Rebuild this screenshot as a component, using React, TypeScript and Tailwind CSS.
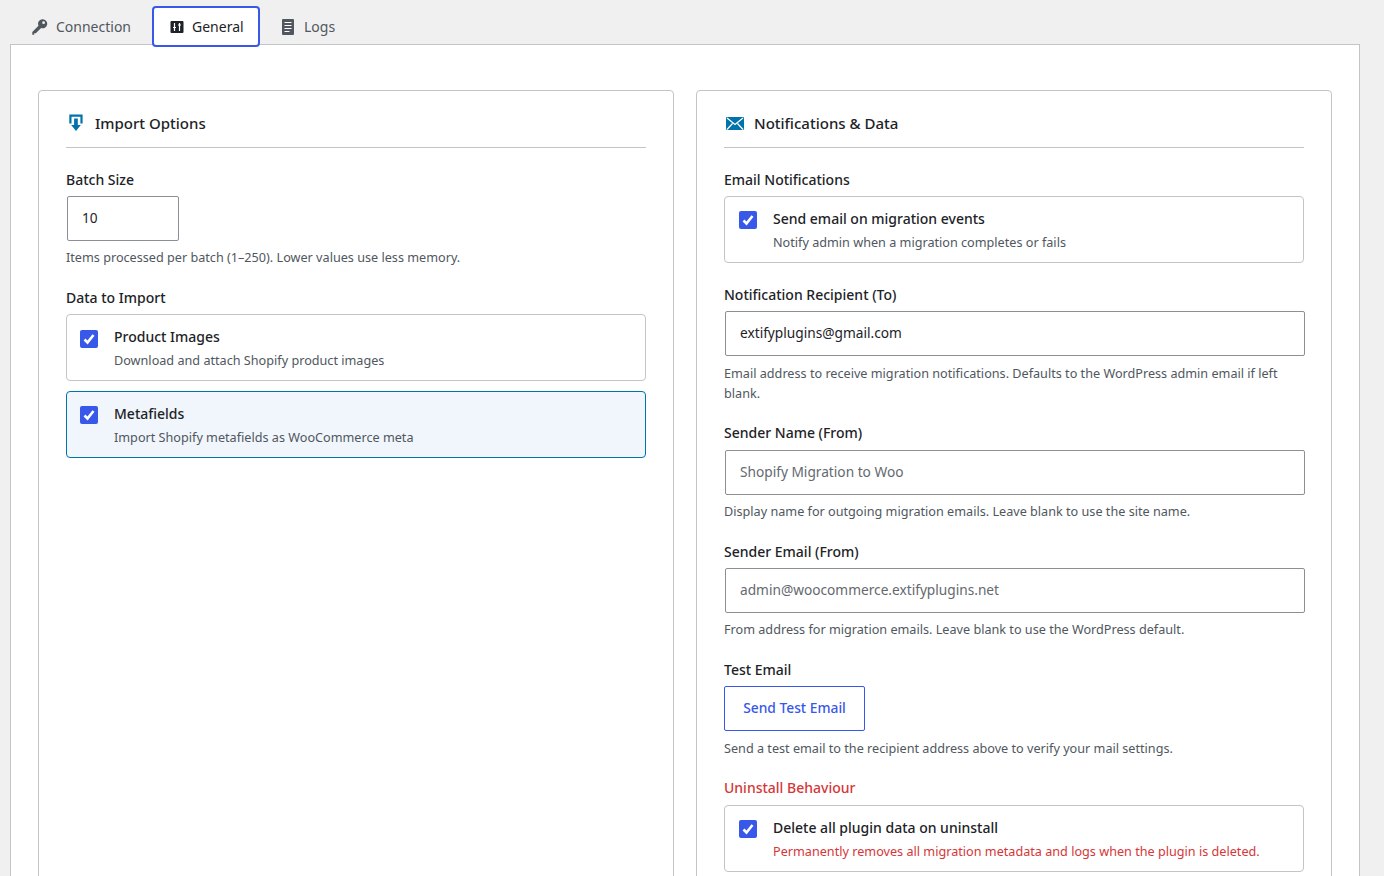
import { ReactNode } from 'react';

function Check({ low }: { low?: boolean }) {
  return (
    <span className={low ? 'mt-[3px] flex h-[18px] w-[18px] shrink-0 items-center justify-center rounded-[2px] bg-[#3858e9]' : 'mt-[2px] flex h-[18px] w-[18px] shrink-0 items-center justify-center rounded-[2px] bg-[#3858e9]'}>
      <svg viewBox="0 0 18 18" className="h-[18px] w-[18px]" fill="none" stroke="#fff" strokeWidth="2.6">
        <path d="M4.5 9.500l3 3 6-7.500" />
      </svg>
    </span>
  );
}

function Option({ title, desc, active, danger, narrow, low }: { title: string; desc: string; active?: boolean; danger?: boolean; narrow?: boolean; low?: boolean }) {
  const pad = narrow ? 'pl-[13px]' : 'pl-[14px]';
  return (
    <div
      className={
        active
          ? `flex h-[67px] gap-4 rounded border border-[#0073aa] bg-[#f0f6fc] pt-[12px] ${pad}`
          : `flex h-[67px] gap-4 rounded border border-[#c3c4c7] bg-white pt-[12px] ${pad}`
      }
    >
      <Check low={low} />
      <div>
        <div className="text-[14px] leading-[20px] font-medium text-[#1d2327]">{title}</div>
        <div className={danger ? 'mt-[3px] text-[12.65px] leading-[20px] text-[#d63638]' : 'mt-[3px] text-[12.65px] leading-[20px] text-[#50575e]'}>{desc}</div>
      </div>
    </div>
  );
}

function Label({ children, danger }: { children: ReactNode; danger?: boolean }) {
  return (
    <div className={danger ? 'mb-[6px] text-[14px] leading-[20px] font-medium text-[#d63638]' : 'mb-[6px] text-[14px] leading-[20px] font-medium text-[#1d2327]'}>
      {children}
    </div>
  );
}

function Help({ children, far }: { children: ReactNode; far?: boolean }) {
  return <p className={far ? 'mt-[7px] text-[12.65px] leading-[20px] text-[#50575e]' : 'mt-[6px] text-[12.65px] leading-[20px] text-[#50575e]'}>{children}</p>;
}

function Field({ value, placeholder }: { value?: string; placeholder?: string }) {
  return (
    <input
      readOnly
      value={value}
      placeholder={placeholder}
      className="ml-px block h-[45px] w-full rounded-[2px] border border-[#8c8f94] bg-white px-[14px] pb-[2px] text-[13.7px] text-[#1d2327] outline-none placeholder:text-[#646970]"
    />
  );
}

function Card({ icon, title, children }: { icon: ReactNode; title: string; children: ReactNode }) {
  return (
    <section className="h-[900px] rounded border border-[#c3c4c7] bg-white px-[27px] pt-[20px]">
      <div className="mb-[22px] flex h-[37px] items-start border-b border-[#c3c4c7]">
        {icon}
        <h2 className="text-[15px] leading-[24px] font-medium text-[#1d2327]">{title}</h2>
      </div>
      {children}
    </section>
  );
}

export default function App() {
  return (
    <div className="h-[876px] overflow-hidden bg-[#f0f0f1] font-['Noto_Sans',sans-serif]">
      <nav className="relative z-10 ml-[10px] flex h-[45px] items-start pl-[22px]">
        <div className="mt-[6px] mr-[21px] flex h-[41px] items-center gap-[8px] text-[14px] text-[#50575e]">
          <svg viewBox="0 0 16 16" className="h-[16px] w-[16px]">
            <path fillRule="evenodd" fill="#50575e" d="M10.800 0.300a4.500 4.500 0 1 1-1.700 8.700L3.800 14.300H2.200V15.700H0.300V13L6.500 6.800A4.500 4.500 0 0 1 10.800 0.300zM11.600 2.300a1.400 1.400 0 1 0 0 2.800 1.400 1.400 0 0 0 0-2.800z" />
          </svg>
          Connection
        </div>
        <div className="mt-[6px] flex h-[41px] w-[108px] items-center gap-[8px] rounded-[4px] border-2 border-[#3858e9] bg-white pl-[16px] text-[14px] text-[#1d2327]">
          <svg viewBox="0 0 14 14" className="h-[14px] w-[14px]">
            <rect x="0.500" y="1" width="13" height="12" rx="1" fill="#1d2327" />
            <path d="M4.500 3v8M9.500 3v8M3 7.500h3M8 5h3" stroke="#fff" strokeWidth="1.200" />
          </svg>
          General
        </div>
        <div className="mt-[6px] ml-[21px] flex h-[41px] items-center gap-[9px] text-[14px] text-[#50575e]">
          <svg viewBox="0 0 14 16" className="h-[16px] w-[14px]">
            <rect x="1" y="0" width="12" height="16" rx="1" fill="#50575e" />
            <path d="M3.500 3.500h7M3.500 6.500h7M3.500 9.500h7M3.500 12.500h5" stroke="#fff" strokeWidth="1" />
          </svg>
          Logs
        </div>
      </nav>

      <main className="-mt-px ml-[10px] grid h-[900px] w-[1350px] grid-cols-[636px_636px] gap-[22px] border border-[#c3c4c7] bg-white px-[27px] pt-[45px]">
        <Card
          title="Import Options"
          icon={
            <svg viewBox="0 0 14 18" className="mt-[3px] mr-[12px] ml-[3px] h-[18px] w-[14px]" fill="#0073aa">
              <path d="M0.300 0.500H13.600V9.500H11.400V2.700H2.500V9.500H0.300z" />
              <path d="M5.100 4.500H8.800V11H11.800L7 17 2.200 11H5.100z" />
            </svg>
          }
        >
          <Label>Batch Size</Label>
          <div className="w-[112px]">
            <Field value="10" />
          </div>
          <Help>Items processed per batch (1–250). Lower values use less memory.</Help>
          <div className="mt-[21px]">
            <Label>Data to Import</Label>
          </div>
          <div className="flex flex-col gap-[10px]">
            <Option narrow low title="Product Images" desc="Download and attach Shopify product images" />
            <Option narrow active title="Metafields" desc="Import Shopify metafields as WooCommerce meta" />
          </div>
        </Card>

        <Card
          title="Notifications & Data"
          icon={
            <svg viewBox="0 0 18 13" className="mt-[6px] mr-[10px] ml-[2px] h-[13px] w-[18px]">
              <rect x="0" y="0" width="18" height="13" rx="1" fill="#0073aa" />
              <path d="M1 1l8 6.500 8-6.500M1 12.500l5.500-6M17 12.500l-5.500-6" stroke="#fff" strokeWidth="1.200" fill="none" />
            </svg>
          }
        >
          <Label>Email Notifications</Label>
          <Option title="Send email on migration events" desc="Notify admin when a migration completes or fails" />

          <div className="mt-[22px]">
            <Label>Notification Recipient (To)</Label>
          </div>
          <Field value="extifyplugins@gmail.com" />
          <Help far>Email address to receive migration notifications. Defaults to the WordPress admin email if left blank.</Help>

          <div className="mt-[20px] pb-px">
            <Label>Sender Name (From)</Label>
          </div>
          <Field placeholder="Shopify Migration to Woo" />
          <Help>Display name for outgoing migration emails. Leave blank to use the site name.</Help>

          <div className="mt-[21px]">
            <Label>Sender Email (From)</Label>
          </div>
          <Field placeholder="admin@woocommerce.extifyplugins.net" />
          <Help>From address for migration emails. Leave blank to use the WordPress default.</Help>

          <div className="mt-[21px]">
            <Label>Test Email</Label>
          </div>
          <button className="block h-[45px] w-[141px] rounded-[2px] border border-[#3858e9] bg-white text-[13.8px] font-medium text-[#3858e9]">
            Send Test Email
          </button>
          <Help far>Send a test email to the recipient address above to verify your mail settings.</Help>

          <div className="mt-[20px] pb-px">
            <Label danger>Uninstall Behaviour</Label>
          </div>
          <Option danger title="Delete all plugin data on uninstall" desc="Permanently removes all migration metadata and logs when the plugin is deleted." />
        </Card>
      </main>
    </div>
  );
}
